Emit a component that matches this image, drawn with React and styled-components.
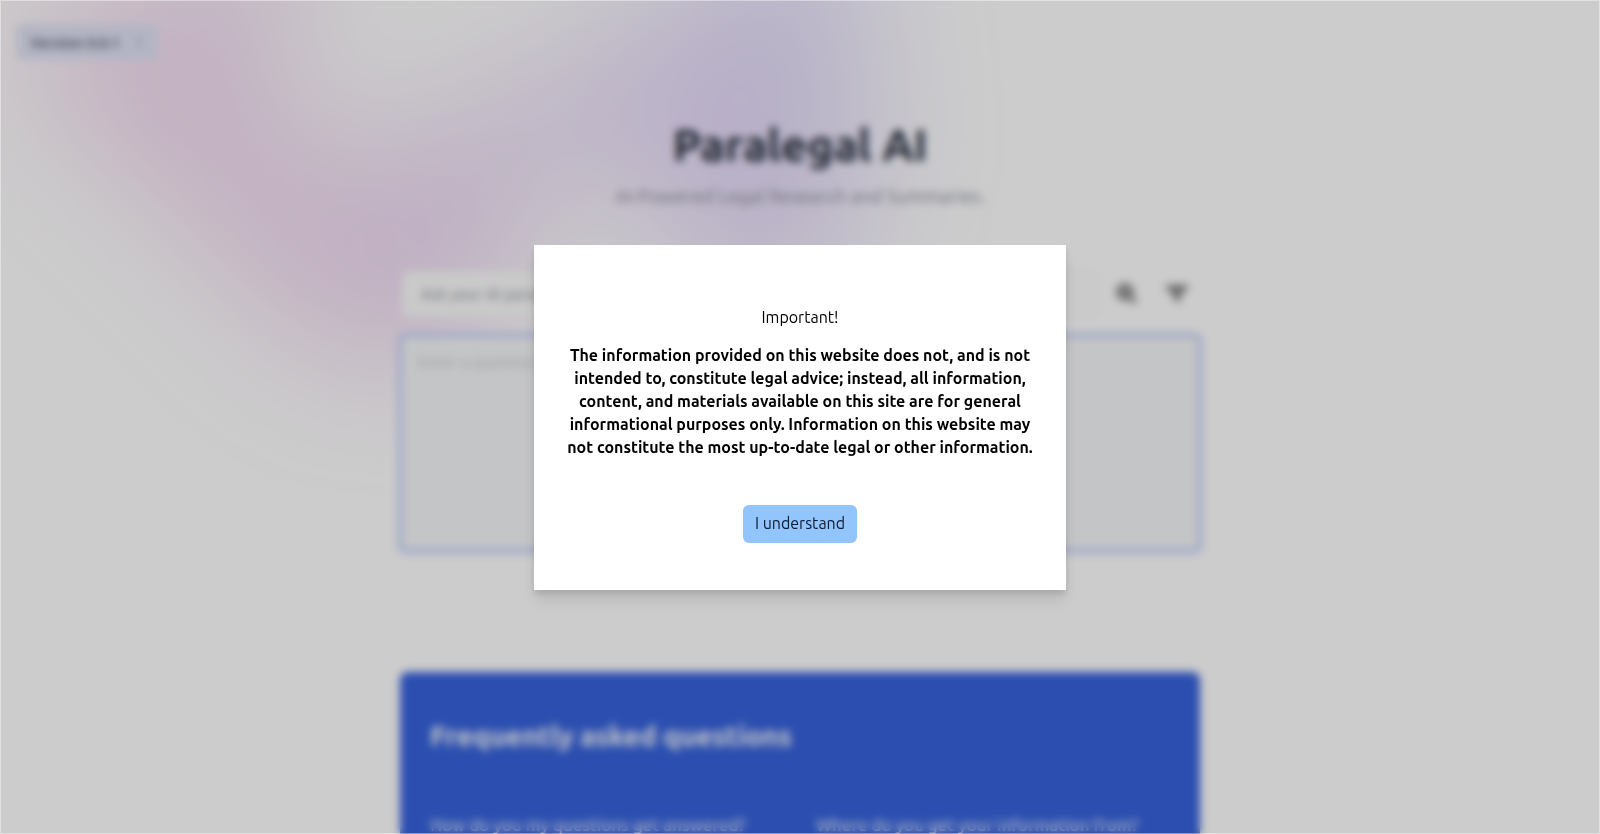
import React from "react";
import styled, { createGlobalStyle } from "styled-components";

const GlobalStyle = createGlobalStyle`
  *, *::before, *::after { box-sizing: border-box; }
  body {
    margin: 0;
    background: #fff;
    color: #000;
    font-family: Ubuntu, Lato, sans-serif;
    font-size: 16px;
    line-height: 23px;
  }
  h1, h2, h3, p { margin: 0; }
  button, input, textarea { font: inherit; }
`;

const Page = styled.div`
  position: relative;
  height: 100vh;
  overflow: hidden;
  isolation: isolate;
`;

const Glow = styled.div`
  position: absolute;
  inset: -320px 0 auto;
  z-index: -1;
  overflow: hidden;
  filter: blur(64px);
`;

const GlowShape = styled.div`
  position: relative;
  left: calc(50% - 480px);
  width: 1155px;
  aspect-ratio: 1155 / 678;
  transform: translateX(-50%) rotate(30deg);
  background: linear-gradient(to top right, #ff80b5, #9089fc);
  opacity: 0.3;
  clip-path: polygon(
    74.1% 44.1%, 100% 61.6%, 97.5% 26.9%, 85.5% 0.1%, 80.7% 2%, 72.5% 32.5%,
    60.2% 62.4%, 52.4% 68.1%, 47.5% 58.3%, 45.2% 34.5%, 27.5% 76.7%,
    0.1% 64.9%, 17.9% 100%, 27.6% 76.8%, 76.1% 97.7%, 74.1% 44.1%
  );
`;

const TopBar = styled.header`
  display: flex;
  padding: 24px 16px;
`;

const VersionLink = styled.a`
  display: flex;
  align-items: center;
  gap: 14px;
  height: 36px;
  padding: 0 14px;
  border-radius: 6px;
  background: #e1e3f5;
  color: #62647c;
  font-size: 15px;
  font-weight: 700;
  text-decoration: none;
`;

const Column = styled.main`
  width: 800px;
  max-width: 100%;
  margin: 0 auto;
  padding-top: 31px;
`;

const Hero = styled.div`
  display: flex;
  flex-direction: column;
  align-items: center;
  gap: 7px;
  text-align: center;
`;

const Title = styled.h1`
  color: #1f2937;
  font-size: 45px;
  line-height: 60px;
  font-weight: 700;
`;

const Tagline = styled.p`
  color: #858a96;
  font-size: 19px;
  line-height: 28px;
`;

const SearchForm = styled.form`
  display: flex;
  flex-direction: column;
  gap: 20px;
  padding: 61px 2px 0;
`;

const SearchRow = styled.div`
  display: flex;
  align-items: center;
  gap: 8px;
`;

const QueryInput = styled.input`
  flex: 1;
  min-width: 0;
  height: 46px;
  padding: 0 18px;
  border: 1px solid #f0f1f3;
  border-radius: 6px;
  background: #fdfdfd;
  color: #374151;
  &::placeholder { color: #8c919b; opacity: 1; }
`;

const IconButton = styled.button`
  display: flex;
  align-items: center;
  justify-content: center;
  width: 42px;
  height: 42px;
  padding: 0;
  border: 0;
  background: none;
  color: #858585;
`;

const Answer = styled.textarea`
  display: block;
  width: 100%;
  height: 212px;
  padding: 14px 16px;
  border: 0;
  border-radius: 4px;
  background: #f6f7f9;
  box-shadow: 0 0 0 4px #bccafa;
  outline: none;
  resize: none;
  &::placeholder { color: #c4c7cd; opacity: 1; }
`;

const Faq = styled.section`
  margin-top: 123px;
  padding: 44px 30px;
  border-radius: 8px;
  background: #3662dc;
  color: #fff;
`;

const FaqTitle = styled.h2`
  padding-bottom: 28px;
  border-bottom: 1px solid #3a64da;
  font-size: 28px;
  line-height: 40px;
  font-weight: 700;
`;

const FaqGrid = styled.div`
  display: grid;
  grid-template-columns: 1fr 1fr;
  gap: 32px;
  padding-top: 30px;
`;

const Question = styled.h3`
  color: #e4eafb;
  font-size: 17px;
  line-height: 20px;
  font-weight: 500;
  white-space: nowrap;
`;

const Backdrop = styled.div`
  position: fixed;
  inset: 0;
  display: flex;
  align-items: center;
  justify-content: center;
  border: 1px solid rgba(255, 255, 255, 0.4);
  background: rgba(0, 0, 0, 0.2);
  backdrop-filter: blur(4px);
`;

const Dialog = styled.div`
  display: flex;
  flex-direction: column;
  align-items: center;
  gap: 15px;
  width: 532px;
  max-width: 100%;
  padding: 61px 32px 47px;
  background: #fff;
  box-shadow: 0 10px 15px rgba(0, 0, 0, 0.1), 0 4px 6px rgba(0, 0, 0, 0.1);
  text-align: center;
`;

const Notice = styled.p`
  font-weight: 700;
`;

const ConfirmButton = styled.button`
  height: 38px;
  margin-top: 31px;
  padding: 0 12px;
  border: 0;
  border-radius: 6px;
  background: #93c5fd;
  color: #0b1a33;
`;

const NOTICE_LINES = [
  "The information provided on this website does not, and is not",
  "intended to, constitute legal advice; instead, all information,",
  "content, and materials available on this site are for general",
  "informational purposes only. Information on this website may",
  "not constitute the most up-to-date legal or other information.",
];

const QUESTIONS = [
  "How do you my questions get answered?",
  "Where do you get your information from?",
];

export default function App() {
  return (
    <>
      <GlobalStyle />
      <Page>
        <Glow aria-hidden="true">
          <GlowShape />
        </Glow>
        <TopBar>
          <VersionLink href="#version">
            Version 0.0.1
            <svg width="10" height="12" viewBox="0 0 10 12" fill="none" stroke="#a9adb8" strokeWidth="2">
              <path d="M3 2l4 4-4 4" />
            </svg>
          </VersionLink>
        </TopBar>
        <Column>
          <Hero>
            <Title>Paralegal AI</Title>
            <Tagline>AI-Powered Legal Research and Summaries.</Tagline>
          </Hero>
          <SearchForm>
            <SearchRow>
              <QueryInput aria-label="Question" placeholder="Ask your AI paralegal" />
              <IconButton type="button" aria-label="Search">
                <svg width="24" height="24" viewBox="0 0 24 24" fill="none" stroke="currentColor" strokeWidth="4">
                  <circle cx="10" cy="10" r="7" fill="#a5a5a5" />
                  <path d="M15 15l6 6" />
                </svg>
              </IconButton>
              <IconButton type="button" aria-label="Filter">
                <svg width="24" height="24" viewBox="0 0 24 24" fill="currentColor">
                  <path d="M1 3h22v3l-8 8v7l-6-3v-4L1 6z" />
                </svg>
              </IconButton>
            </SearchRow>
            <Answer aria-label="Answer" placeholder="Enter a question" />
          </SearchForm>
          <Faq>
            <FaqTitle>Frequently asked questions</FaqTitle>
            <FaqGrid>
              {QUESTIONS.map((q) => (
                <Question key={q}>{q}</Question>
              ))}
            </FaqGrid>
          </Faq>
        </Column>
      </Page>
      <Backdrop>
        <Dialog role="dialog" aria-modal="true" aria-labelledby="notice-title">
          <p id="notice-title">Important!</p>
          <Notice>
            {NOTICE_LINES.map((line, i) => (
              <React.Fragment key={line}>
                {i > 0 && <br />}
                {line}
              </React.Fragment>
            ))}
          </Notice>
          <ConfirmButton type="button">I understand</ConfirmButton>
        </Dialog>
      </Backdrop>
    </>
  );
}
